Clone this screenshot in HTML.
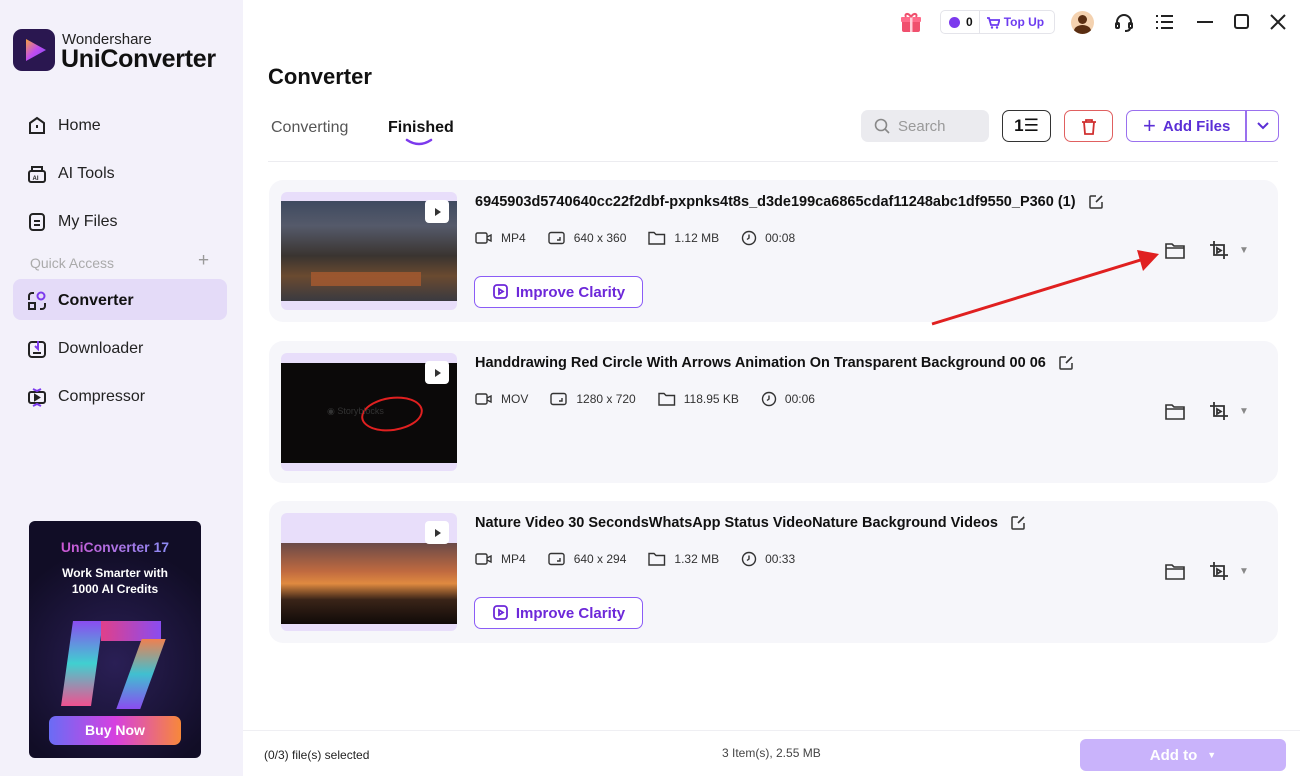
<!DOCTYPE html>
<html><head><meta charset="utf-8"><style>
*{box-sizing:border-box;margin:0;padding:0}
body{width:1300px;height:776px;position:relative;overflow:hidden;font-family:"Liberation Sans","DejaVu Sans",sans-serif;background:#fff;color:#111}
.side{position:absolute;left:0;top:0;width:243px;height:776px;background:#f3f1fa}
.abs{position:absolute}
.nav{position:absolute;left:26px;font-size:16px;color:#222;display:flex;align-items:center;gap:10px}
.nav svg{width:22px;height:22px}
.card{position:absolute;left:269px;width:1009px;height:142px;background:#f6f6fa;border-radius:14px}
.thumb{position:absolute;left:12px;top:12px;width:176px;height:118px;background:#e8defa;border-radius:6px;overflow:hidden}
.title{position:absolute;left:206px;top:14px;font-size:14.5px;font-weight:bold;color:#111;white-space:nowrap;display:flex;align-items:center;gap:12px}
.meta{position:absolute;left:206px;top:50px;font-size:12px;color:#333;display:flex;align-items:center}
.meta span{display:flex;align-items:center;gap:8px;margin-right:22px}
.imp{position:absolute;left:205px;top:96px;width:169px;height:32px;border:1.5px solid #8b5cf6;border-radius:7px;color:#6d28d9;font-weight:bold;font-size:15px;display:flex;align-items:center;justify-content:center;gap:6px;background:#fff}
.acts{position:absolute;left:896px;top:60px;display:flex;align-items:center;gap:24px}
</style></head><body>
<svg width="0" height="0" style="position:absolute">
 <defs>
  <symbol id="cam" viewBox="0 0 18 14"><rect x="1" y="2" width="11" height="10" rx="1.5" fill="none" stroke="#333" stroke-width="1.4"/><path d="M12 6l4-2v6l-4-2" fill="none" stroke="#333" stroke-width="1.4"/></symbol>
  <symbol id="res" viewBox="0 0 18 14"><rect x="1" y="1.5" width="15" height="11" rx="2" fill="none" stroke="#333" stroke-width="1.4"/><path d="M12 6v3H9" fill="none" stroke="#333" stroke-width="1.4"/></symbol>
  <symbol id="fold" viewBox="0 0 18 14"><path d="M1 1.5h5l2 2h8.5v9.5H1z" fill="none" stroke="#333" stroke-width="1.4"/></symbol>
  <symbol id="clk" viewBox="0 0 16 16"><circle cx="8" cy="8" r="6.5" fill="none" stroke="#333" stroke-width="1.4"/><path d="M8 4.5V8l-2 1.5" fill="none" stroke="#333" stroke-width="1.4"/></symbol>
  <symbol id="edit" viewBox="0 0 16 16"><path d="M8 2H3a1 1 0 00-1 1v10a1 1 0 001 1h10a1 1 0 001-1V8" fill="none" stroke="#333" stroke-width="1.5"/><path d="M14 2L8 8" stroke="#333" stroke-width="1.6"/></symbol>
 </defs>
</svg>
<div class="side">
 <div class="abs" style="left:13px;top:29px;width:42px;height:42px;border-radius:9px;background:#2a1750">
  <svg width="42" height="42"><defs><linearGradient id="g" x1="0" y1="0" x2="1" y2="1"><stop offset="0" stop-color="#f4a23c"/><stop offset=".5" stop-color="#c04cf0"/><stop offset="1" stop-color="#7b4cf5"/></linearGradient></defs><path d="M13 10 L33 21 L13 32 Z" fill="url(#g)"/></svg>
 </div>
 <div class="abs" style="left:62px;top:31px;font-size:15px;color:#222">Wondershare</div>
 <div class="abs" style="left:61px;top:45px;font-size:25px;font-weight:bold;color:#111;letter-spacing:-.3px">UniConverter</div>
 <div class="nav" style="top:115px"><svg viewBox="0 0 22 22" fill="none" stroke="#222" stroke-width="2"><path d="M4 8l7-5 7 5v10H4z"/><path d="M11 10v3"/></svg>Home</div>
 <div class="nav" style="top:163px"><svg viewBox="0 0 22 22" fill="none" stroke="#222" stroke-width="2"><rect x="3" y="8" width="16" height="11" rx="2"/><path d="M6 8V4h10v4"/><text x="6.5" y="17" font-size="6" fill="#222" stroke="none" font-weight="bold">AI</text></svg>AI Tools</div>
 <div class="nav" style="top:211px"><svg viewBox="0 0 22 22" fill="none" stroke="#222" stroke-width="2"><rect x="4" y="3" width="14" height="16" rx="3"/><path d="M8 10h6M8 14h6"/></svg>My Files</div>
 <div class="abs" style="left:30px;top:255px;font-size:14px;color:#aaa">Quick Access</div>
 <div class="abs" style="left:198px;top:250px;font-size:19px;color:#999">+</div>
 <div class="abs" style="left:13px;top:279px;width:214px;height:41px;background:#e4dbf8;border-radius:8px"></div>
 <div class="nav" style="top:290px;font-weight:bold;color:#111"><svg viewBox="0 0 22 22" fill="none" stroke="#222" stroke-width="2"><circle cx="15" cy="6" r="3.5" stroke="#7c3aed"/><path d="M3 10V6a3 3 0 013-3h2M3 13h6v6H3zM19 13v3a3 3 0 01-3 3h-2"/></svg>Converter</div>
 <div class="nav" style="top:338px"><svg viewBox="0 0 22 22" fill="none" stroke="#222" stroke-width="2"><rect x="3" y="4" width="16" height="15" rx="3"/><path d="M12 3v8l-3-3" stroke="#7c3aed"/><path d="M7 15h8"/></svg>Downloader</div>
 <div class="nav" style="top:386px"><svg viewBox="0 0 22 22" fill="none" stroke="#222" stroke-width="2"><rect x="3" y="6" width="16" height="11" rx="2"/><path d="M9 9l4 2.5-4 2.5z" fill="#222"/><path d="M7 3l4 2 4-2M7 20l4-2 4 2" stroke="#7c3aed"/></svg>Compressor</div>
 <div class="abs" style="left:29px;top:521px;width:172px;height:237px;border-radius:6px;background:radial-gradient(circle at 50% 60%,#2a1f55,#110d26 70%)">
  <div class="abs" style="left:0;width:172px;top:18px;text-align:center;font-weight:bold;font-size:14px;background:linear-gradient(90deg,#e047c8,#7a9cff);-webkit-background-clip:text;color:transparent">UniConverter 17</div>
  <div class="abs" style="left:0;width:172px;top:44px;text-align:center;font-weight:bold;font-size:12px;color:#fff;line-height:16px">Work Smarter with<br>1000 AI Credits</div>
  <div class="abs" style="left:38px;top:100px;width:30px;height:85px;background:linear-gradient(#8a4cf0,#40d0d0,#f05090);transform:skewX(-8deg)"></div>
  <div class="abs" style="left:72px;top:100px;width:60px;height:20px;background:linear-gradient(90deg,#e0408a,#8a4cf0)"></div>
  <div class="abs" style="left:100px;top:118px;width:24px;height:70px;background:linear-gradient(#f08050,#40c0d0,#8a4cf0);transform:skewX(-20deg)"></div>
  <div class="abs" style="left:20px;top:195px;width:132px;height:29px;border-radius:7px;background:linear-gradient(90deg,#6a6cf5,#d640e0,#f7883a);color:#fff;font-weight:bold;font-size:14px;text-align:center;line-height:29px">Buy Now</div>
 </div>
</div>

<!-- top bar -->
<div class="abs" style="left:899px;top:10px;width:24px;height:24px"><svg width="24" height="24"><rect x="3" y="9" width="18" height="13" rx="2" fill="#f0506e"/><rect x="2" y="7" width="20" height="5" rx="1" fill="#ff6b8a"/><rect x="11" y="7" width="2.5" height="15" fill="#ffd0da"/><path d="M12 7c-3-5-7-3-5 0M12 7c3-5 7-3 5 0" stroke="#f0506e" stroke-width="2" fill="none"/></svg></div>
<div class="abs" style="left:940px;top:10px;width:115px;height:24px;border:1px solid #e4e4ea;border-radius:5px;display:flex;align-items:center;font-size:12px;font-weight:bold">
 <span style="display:inline-block;width:11px;height:11px;border-radius:50%;background:#7c3aed;margin:0 6px 0 8px"></span><span>0</span>
 <span style="width:1px;height:24px;background:#e4e4ea;margin:0 6px"></span>
 <svg width="14" height="13" style="margin-right:4px"><path d="M1 2h2l2 7h7l1.5-5H4" fill="none" stroke="#6d3cf0" stroke-width="1.8"/><circle cx="6" cy="11.5" r="1.2" fill="#6d3cf0"/><circle cx="11" cy="11.5" r="1.2" fill="#6d3cf0"/></svg><span style="color:#6d3cf0">Top Up</span></div>
<div class="abs" style="left:1071px;top:11px;width:23px;height:23px;border-radius:50%;background:#f4d2b0;overflow:hidden"><div class="abs" style="left:7px;top:4px;width:9px;height:9px;border-radius:50%;background:#5a2e12"></div><div class="abs" style="left:3px;top:14px;width:17px;height:12px;border-radius:50%;background:#5a2e12"></div></div>
<svg class="abs" style="left:1113px;top:11px" width="22" height="22" fill="none" stroke="#222" stroke-width="2"><path d="M4 14v-3a7 7 0 0114 0v3"/><rect x="3" y="12" width="3" height="5" rx="1"/><rect x="16" y="12" width="3" height="5" rx="1"/><path d="M17 17c0 2-2 3-5 3"/></svg>
<svg class="abs" style="left:1154px;top:12px" width="20" height="20" stroke="#222" stroke-width="2"><path d="M7 4h12M7 10h12M7 16h12M2 4h2M2 10h2M2 16h2"/></svg>
<div class="abs" style="left:1197px;top:21px;width:16px;height:2px;background:#222"></div>
<div class="abs" style="left:1234px;top:14px;width:15px;height:15px;border:2px solid #222;border-radius:3px"></div>
<svg class="abs" style="left:1270px;top:14px" width="16" height="16" stroke="#222" stroke-width="2"><path d="M1 1l14 14M15 1L1 15"/></svg>

<div class="abs" style="left:268px;top:64px;font-size:22px;font-weight:bold">Converter</div>
<div class="abs" style="left:271px;top:119px;font-size:16px;color:#555">Converting</div>
<div class="abs" style="left:388px;top:119px;font-size:16px;font-weight:bold;color:#111">Finished</div>
<svg class="abs" style="left:405px;top:138px" width="28" height="8"><path d="M2 2q12 8 24 0" stroke="#7c3aed" stroke-width="2.5" fill="none" stroke-linecap="round"/></svg>
<div class="abs" style="left:268px;top:161px;width:1010px;height:1px;background:#ececf0"></div>

<div class="abs" style="left:861px;top:110px;width:128px;height:32px;background:#ebebef;border-radius:7px;font-size:15px;color:#999;display:flex;align-items:center"><svg style="margin:0 8px 0 13px" width="16" height="16" fill="none" stroke="#888" stroke-width="1.6"><circle cx="7" cy="7" r="5.5"/><path d="M11 11l4 4"/></svg>Search</div>
<div class="abs" style="left:1002px;top:110px;width:49px;height:32px;border:1.5px solid #333;border-radius:7px;font-weight:bold;font-size:17px;display:flex;align-items:center;justify-content:center">1☰</div>
<div class="abs" style="left:1064px;top:110px;width:49px;height:32px;border:1.5px solid #e06060;border-radius:7px;display:flex;align-items:center;justify-content:center"><svg width="16" height="17" fill="none" stroke="#d03030" stroke-width="1.8"><path d="M1 4h14M5 4V2h6v2M3 4l1 12h8l1-12"/></svg></div>
<div class="abs" style="left:1126px;top:110px;width:153px;height:32px;border:1.5px solid #9a70ee;border-radius:7px;display:flex;align-items:center;color:#5b2fd6;font-weight:bold;font-size:15px">
 <span style="font-size:22px;font-weight:normal;margin:0 7px 0 16px;line-height:1">+</span>Add Files
 <span style="position:absolute;left:118px;top:0;width:1.5px;height:30px;background:#9a70ee"></span>
 <svg style="position:absolute;left:129px;top:10px" width="14" height="10" fill="none" stroke="#5b2fd6" stroke-width="2"><path d="M2 2l5 5 5-5"/></svg></div>

<!-- cards -->
<div class="card" style="top:180px">
 <div class="thumb"><div class="abs" style="left:0;top:9px;width:176px;height:100px;background:linear-gradient(180deg,#3f4a60 0%,#555a6a 25%,#3a3430 55%,#6a4a30 75%,#3a3a40 100%)"></div>
  <div class="abs" style="left:30px;top:80px;width:110px;height:14px;background:#a85a30;opacity:.8"></div></div>
 <div class="abs" style="left:156px;top:20px;width:24px;height:23px;background:#fff;border-radius:4px"><svg width="24" height="23"><path d="M10 8l6 4-6 4z" fill="#333"/></svg></div>
 <div class="title">6945903d5740640cc22f2dbf-pxpnks4t8s_d3de199ca6865cdaf11248abc1df9550_P360 (1)<svg width="16" height="16"><use href="#edit"/></svg></div>
 <div class="meta"><span><svg width="18" height="14"><use href="#cam"/></svg>MP4</span><span><svg width="18" height="14"><use href="#res"/></svg>640 x 360</span><span><svg width="18" height="14"><use href="#fold"/></svg>1.12 MB</span><span><svg width="16" height="16"><use href="#clk"/></svg>00:08</span></div>
 <div class="imp"><svg width="18" height="18" fill="none" stroke="#6d28d9" stroke-width="1.8"><rect x="2" y="2" width="13" height="13" rx="3"/><path d="M7 6l4 2.5-4 2.5z"/></svg>Improve Clarity</div>
 <div class="acts"><svg width="20" height="17" fill="none" stroke="#333" stroke-width="1.6"><path d="M1 2h6l2 2h10v12H1z"/><path d="M1 6h18"/></svg><span style="display:flex;align-items:center;gap:10px"><svg width="20" height="20" fill="none" stroke="#333" stroke-width="1.8"><path d="M5 1v14h14M1 5h14v14"/><path d="M8 8l4 2.5-4 2.5z"/></svg><span style="color:#888;font-size:10px">▼</span></span></div>
</div>
<div class="card" style="top:341px">
 <div class="thumb"><div class="abs" style="left:0;top:10px;width:176px;height:100px;background:#0b0909"></div>
  <div class="abs" style="left:80px;top:44px;width:62px;height:34px;border:2px solid #e02020;border-radius:50%;transform:rotate(-8deg)"></div>
  <div class="abs" style="left:46px;top:53px;font-size:9px;color:#333">◉ Storyblocks</div></div>
 <div class="abs" style="left:156px;top:20px;width:24px;height:23px;background:#fff;border-radius:4px"><svg width="24" height="23"><path d="M10 8l6 4-6 4z" fill="#333"/></svg></div>
 <div class="title">Handdrawing Red Circle With Arrows Animation On Transparent Background 00 06<svg width="16" height="16"><use href="#edit"/></svg></div>
 <div class="meta"><span><svg width="18" height="14"><use href="#cam"/></svg>MOV</span><span><svg width="18" height="14"><use href="#res"/></svg>1280 x 720</span><span><svg width="18" height="14"><use href="#fold"/></svg>118.95 KB</span><span><svg width="16" height="16"><use href="#clk"/></svg>00:06</span></div>
 <div class="acts"><svg width="20" height="17" fill="none" stroke="#333" stroke-width="1.6"><path d="M1 2h6l2 2h10v12H1z"/><path d="M1 6h18"/></svg><span style="display:flex;align-items:center;gap:10px"><svg width="20" height="20" fill="none" stroke="#333" stroke-width="1.8"><path d="M5 1v14h14M1 5h14v14"/><path d="M8 8l4 2.5-4 2.5z"/></svg><span style="color:#888;font-size:10px">▼</span></span></div>
</div>
<div class="card" style="top:501px">
 <div class="thumb"><div class="abs" style="left:0;top:30px;width:176px;height:81px;background:linear-gradient(180deg,#6a4a48 0%,#c06a40 35%,#e08a40 50%,#3a2418 70%,#100a08 100%)"></div></div>
 <div class="abs" style="left:156px;top:20px;width:24px;height:23px;background:#fff;border-radius:4px"><svg width="24" height="23"><path d="M10 8l6 4-6 4z" fill="#333"/></svg></div>
 <div class="title">Nature Video 30 SecondsWhatsApp Status VideoNature Background Videos<svg width="16" height="16"><use href="#edit"/></svg></div>
 <div class="meta"><span><svg width="18" height="14"><use href="#cam"/></svg>MP4</span><span><svg width="18" height="14"><use href="#res"/></svg>640 x 294</span><span><svg width="18" height="14"><use href="#fold"/></svg>1.32 MB</span><span><svg width="16" height="16"><use href="#clk"/></svg>00:33</span></div>
 <div class="imp"><svg width="18" height="18" fill="none" stroke="#6d28d9" stroke-width="1.8"><rect x="2" y="2" width="13" height="13" rx="3"/><path d="M7 6l4 2.5-4 2.5z"/></svg>Improve Clarity</div>
 <div class="acts"><svg width="20" height="17" fill="none" stroke="#333" stroke-width="1.6"><path d="M1 2h6l2 2h10v12H1z"/><path d="M1 6h18"/></svg><span style="display:flex;align-items:center;gap:10px"><svg width="20" height="20" fill="none" stroke="#333" stroke-width="1.8"><path d="M5 1v14h14M1 5h14v14"/><path d="M8 8l4 2.5-4 2.5z"/></svg><span style="color:#888;font-size:10px">▼</span></span></div>
</div>

<!-- red arrow -->
<svg class="abs" style="left:925px;top:245px" width="240" height="85"><path d="M7 79L222 13" stroke="#e02020" stroke-width="3"/><path d="M234 9L212 5 218 26z" fill="#e02020"/></svg>

<!-- bottom -->
<div class="abs" style="left:243px;top:730px;width:1057px;height:1px;background:#efeff3"></div>
<div class="abs" style="left:264px;top:748px;font-size:12px;color:#222">(0/3) file(s) selected</div>
<div class="abs" style="left:722px;top:746px;font-size:12px;color:#444">3 Item(s), 2.55 MB</div>
<div class="abs" style="left:1080px;top:739px;width:206px;height:32px;background:#c9b3fb;border-radius:6px;color:#fff;font-weight:bold;font-size:15px;display:flex;align-items:center;justify-content:center;gap:10px">Add to <span style="font-size:9px">▼</span></div>
</body></html>
